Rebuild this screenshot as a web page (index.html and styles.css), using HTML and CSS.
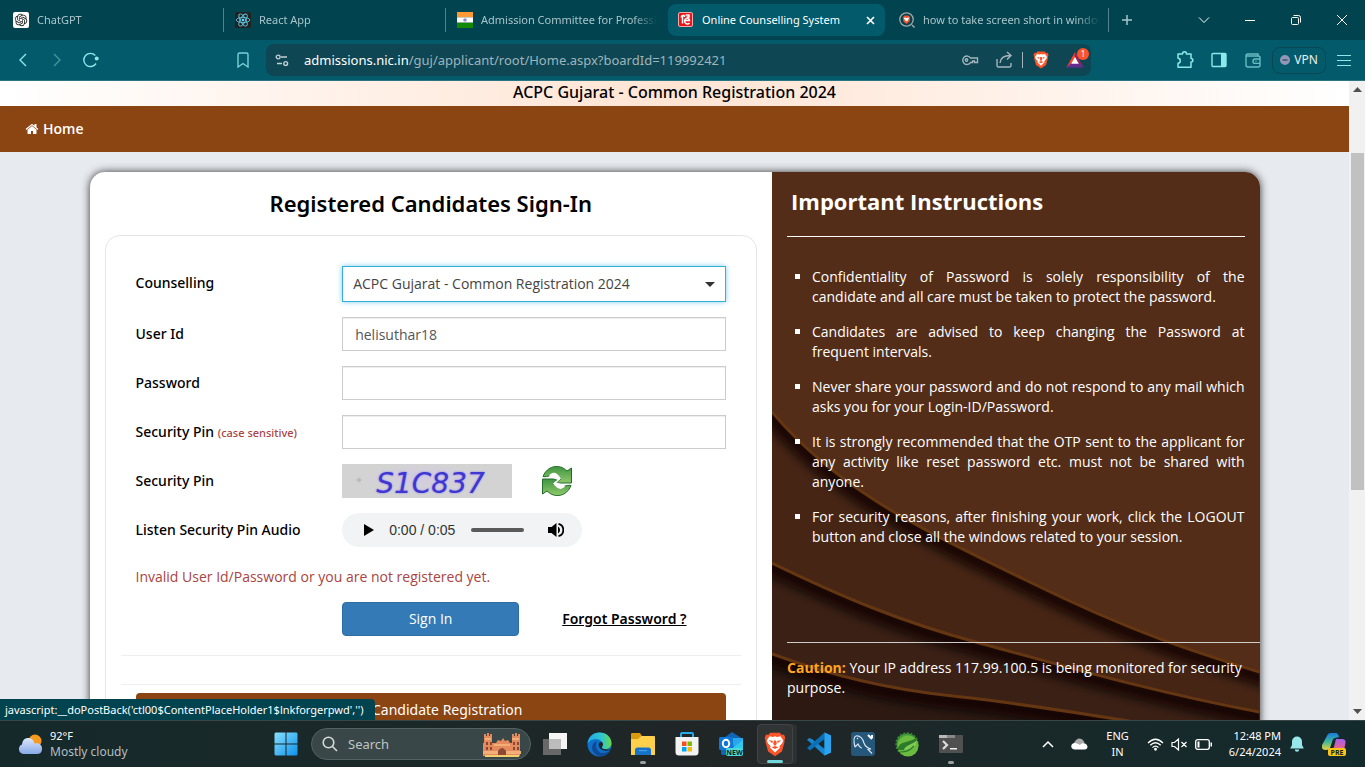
FILE: index.html
```html
<!DOCTYPE html>
<html lang="en">
<head>
<meta charset="utf-8">
<title>Online Counselling System</title>
<link rel="stylesheet" href="styles.css">
</head>
<body>
<header class="tabstrip">
  <div class="tabs" role="tablist">
    <button class="tab" role="tab"><svg class="fav" viewBox="0 0 16 16"><rect width="16" height="16" rx="2" fill="#fff"/><path transform="translate(1.8 1.7) scale(.52)" fill="#222" d="M22.2819 9.8211a5.9847 5.9847 0 0 0-.5157-4.9108 6.0462 6.0462 0 0 0-6.5098-2.9A6.0651 6.0651 0 0 0 4.9807 4.1818a5.9847 5.9847 0 0 0-3.9977 2.9 6.0462 6.0462 0 0 0 .7427 7.0966 5.98 5.98 0 0 0 .511 4.9107 6.051 6.051 0 0 0 6.5146 2.9001A5.9847 5.9847 0 0 0 13.2599 24a6.0557 6.0557 0 0 0 5.7718-4.2058 5.9894 5.9894 0 0 0 3.9977-2.9001 6.0557 6.0557 0 0 0-.7475-7.0729zm-9.022 12.6081a4.4755 4.4755 0 0 1-2.8764-1.0408l.1419-.0804 4.7783-2.7582a.7948.7948 0 0 0 .3927-.6813v-6.7369l2.02 1.1686a.071.071 0 0 1 .038.052v5.5826a4.504 4.504 0 0 1-4.4945 4.4944zm-9.6607-4.1254a4.4708 4.4708 0 0 1-.5346-3.0137l.142.0852 4.783 2.7582a.7712.7712 0 0 0 .7806 0l5.8428-3.3685v2.3324a.0804.0804 0 0 1-.0332.0615L9.74 19.9502a4.4992 4.4992 0 0 1-6.1408-1.6464zM2.3408 7.8956a4.485 4.485 0 0 1 2.3655-1.9728V11.6a.7664.7664 0 0 0 .3879.6765l5.8144 3.3543-2.0201 1.1685a.0757.0757 0 0 1-.071 0l-4.8303-2.7865A4.504 4.504 0 0 1 2.3408 7.872zm16.5963 3.8558L13.1038 8.364 15.1192 7.2a.0757.0757 0 0 1 .071 0l4.8303 2.7913a4.4944 4.4944 0 0 1-.6765 8.1042v-5.6772a.79.79 0 0 0-.407-.667zm2.0107-3.0231l-.142-.0852-4.7735-2.7818a.7759.7759 0 0 0-.7854 0L9.409 9.2297V6.8974a.0662.0662 0 0 1 .0284-.0615l4.8303-2.7866a4.4992 4.4992 0 0 1 6.6802 4.66zM8.3065 12.863l-2.02-1.1638a.0804.0804 0 0 1-.038-.0567V6.0742a4.4992 4.4992 0 0 1 7.3757-3.4537l-.142.0805L8.704 5.459a.7948.7948 0 0 0-.3927.6813zm1.0976-2.3654l2.602-1.4998 2.6069 1.4998v2.9994l-2.5974 1.4997-2.6067-1.4997Z"/></svg><span class="tab-name">ChatGPT</span></button>
    <button class="tab" role="tab"><svg class="fav" viewBox="0 0 16 16"><rect width="16" height="16" rx="2" fill="#222"/><g fill="none" stroke="#5fc4de" stroke-width=".9"><ellipse cx="8" cy="8" rx="6.8" ry="2.6"/><ellipse cx="8" cy="8" rx="6.8" ry="2.6" transform="rotate(60 8 8)"/><ellipse cx="8" cy="8" rx="6.8" ry="2.6" transform="rotate(120 8 8)"/></g><circle cx="8" cy="8" r="1.3" fill="#61dafb"/></svg><span class="tab-name">React App</span></button>
    <button class="tab" role="tab"><svg class="fav" viewBox="0 0 16 16"><path fill="#f93" d="M0 0h16v5.3H0z"/><path fill="#fff" d="M0 5.3h16v5.4H0z"/><path fill="#128807" d="M0 10.7h16V16H0z"/><circle cx="8" cy="8" r="1.8" fill="#8d8dc8"/></svg><span class="tab-name">Admission Committee for Professional</span></button>
    <div class="tab tab-active" role="tab" aria-selected="true"><svg class="fav" viewBox="0 0 16 16"><rect x=".5" y=".5" width="14" height="14" rx="1.5" fill="#e8141b" stroke="#f3a9a9"/><g fill="none" stroke="#fff" stroke-width="1.5"><path d="M3.200 5.500c.3-2.500 3-3 3.500-.5M4.500 3v8.500M7.500 3h3.500v2H8.500M6.500 8.500h5c0-3-4.800-2.800-4.900.4 0 3 2.900 3.700 5 2.200"/></g></svg><span class="tab-name">Online Counselling System</span><button class="tab-close" aria-label="Close tab"><svg width="9" height="9" viewBox="0 0 9 9"><path d="M1 1l7 7M8 1L1 8" stroke="#fff" stroke-width="1.7"/></svg></button></div>
    <button class="tab" role="tab"><svg class="fav" viewBox="0 0 16 16"><circle cx="7.500" cy="7.500" r="6.700" fill="none" stroke="#a3a8aa" stroke-width="1.300"/><path d="M13 13l2.500 2.500" stroke="#a3a8aa" stroke-width="1.400"/><path fill="#f0532d" d="M5.500 3.500h4l1.700 1.700-.6 4.200-3.100 2.700-3.100-2.700-.6-4.200z"/><path fill="#fff" d="M5.700 5.400l1.800.5 1.800-.5.8.8-1.300 2.200-1.300 1-1.300-1L4.900 6.200z"/></svg><span class="tab-name">how to take screen short in windows</span></button>
  </div>
  <button class="new-tab" aria-label="New tab"><svg width="12" height="12" viewBox="0 0 12 12"><path d="M6 1v10M1 6h10" stroke="#a9c5ca" stroke-width="1.500"/></svg></button>
  <div class="win-controls">
    <button aria-label="Search tabs"><svg width="12" height="12" viewBox="0 0 12 12"><path d="M1 3.500l5 5 5-5" fill="none" stroke="#fff"/></svg></button>
    <button aria-label="Minimize"><svg width="12" height="12" viewBox="0 0 12 12"><path d="M1 6.500h10" stroke="#fff"/></svg></button>
    <button aria-label="Restore"><svg width="12" height="12" viewBox="0 0 12 12" fill="none" stroke="#fff"><rect x="1.500" y="3.500" width="7" height="7" rx="1"/><path d="M3.500 1.500h5a2 2 0 0 1 2 2v5"/></svg></button>
    <button aria-label="Close"><svg width="12" height="12" viewBox="0 0 12 12"><path d="M1 1l10 10M11 1L1 11" stroke="#fff"/></svg></button>
  </div>
</header>

<div class="toolbar">
  <div class="nav-buttons">
    <button aria-label="Back"><svg width="10" height="16" viewBox="0 0 10 16"><path d="M8 2L2 8l6 6" fill="none" stroke="#8ce9ea" stroke-width="1.400"/></svg></button>
    <button aria-label="Forward"><svg width="10" height="16" viewBox="0 0 10 16"><path d="M2 2l6 6-6 6" fill="none" stroke="#45949f" stroke-width="1.400"/></svg></button>
    <button aria-label="Reload"><svg width="18" height="16" viewBox="0 0 18 16"><path d="M13.300 3.500A6.600 6.600 0 1 0 14 11.500" fill="none" stroke="#8ce9ea" stroke-width="1.400"/><circle cx="14.700" cy="6.500" r="2" fill="#8ce9ea"/></svg></button>
  </div>
  <button class="bookmark" aria-label="Bookmark"><svg width="12" height="16" viewBox="0 0 12 16"><path d="M1 2.500Q1 1 2.500 1h7Q11 1 11 2.500V15l-5-3.500L1 15z" fill="none" stroke="#7dd0d4" stroke-width="1.400"/></svg></button>
  <div class="address">
    <svg width="14" height="13" viewBox="0 0 14 13" fill="none" stroke="#c4d0d3" stroke-width="1.400"><circle cx="3.200" cy="3" r="1.900"/><path d="M6 3h6M2 9.500h5"/><circle cx="10.700" cy="9.500" r="1.900"/></svg>
    <div class="url" role="textbox" aria-label="Address"><b>admissions.nic.in</b>/guj/applicant/root/Home.aspx?boardId=119992421</div>
    <button aria-label="Passwords"><svg width="18" height="12" viewBox="0 0 18 12" fill="none" stroke="#a4b5ba" stroke-width="1.400"><path d="M9.500 4H16.500v4.500h-3V7h-2v1.500h-2A4.200 4.200 0 1 1 9.500 4z"/><circle cx="5.500" cy="6" r="1.200"/></svg></button>
    <button aria-label="Share"><svg width="18" height="18" viewBox="0 0 18 18" fill="none" stroke="#a4b5ba" stroke-width="1.400"><path d="M2 8v6.500q0 1.500 1.500 1.500h11q1.500 0 1.500-1.500V12M5 12c.3-5 4-7.500 10.500-7.500M12 1l4 3.500L12 8.500"/></svg></button>
    <i class="rule"></i>
    <button aria-label="Shields"><svg width="16" height="18" viewBox="0 0 16 18"><use href="#lion"/></svg></button>
    <button class="rewards" aria-label="Rewards"><svg width="20" height="18" viewBox="0 0 20 18"><path fill="#ff4724" d="M10 1l2 4-6 9-4.500 2.500z"/><path fill="#9e1f63" d="M10 1l8.500 15.500L13 12 9.500 5z"/><path fill="#662d91" d="M1.500 16.500L6 12h8l4.500 4.500z"/><path fill="#fff" d="M10 6l3.800 6.700H6.200z"/></svg><span class="badge">1</span></button>
  </div>
  <div class="ext">
    <button aria-label="Extensions"><svg width="18" height="18" viewBox="0 0 18 18"><path d="M2 3h4.500c0-3 4-3 4 0H15v4.500c2.500 0 2.500 3.500 0 3.500v5.300H2v-4c3 0 3-5 0-5z" fill="none" stroke="#8ce9ea" stroke-width="1.500" stroke-linejoin="round"/></svg></button>
    <button aria-label="Sidebar"><svg width="18" height="18" viewBox="0 0 18 18"><rect x="2" y="2.500" width="14" height="13" rx="1" fill="none" stroke="#8ce9ea" stroke-width="1.400"/><path d="M11 2h5v14h-5z" fill="#8ce9ea"/></svg></button>
    <button aria-label="Wallet"><svg width="18" height="18" viewBox="0 0 18 18" fill="none" stroke="#69bcc3" stroke-width="1.400"><path d="M14 5V3H4Q2 3 2 5v9q0 2 2 2h10q2 0 2-2V6.500Q16 5 14 5H2M16 8h-5q-2 0-2 2.200t2 2.200h5M11.500 10.200h1"/></svg></button>
    <button class="vpn"><i></i>VPN</button>
    <button aria-label="Menu"><svg width="16" height="14" viewBox="0 0 16 14"><path d="M1 2.500h14M1 7.500h14M1 12.500h14" stroke="#8ce9ea"/></svg></button>
  </div>
</div>

<div class="viewport">
  <main class="page">
    <div class="board-name">ACPC Gujarat - Common Registration 2024</div>
    <nav class="site-nav"><a href="#"><svg width="14" height="14" viewBox="0 0 1792 1792" fill="#fff"><path d="M1472 992v480q0 26-19 45t-45 19h-384v-384h-256v384h-384q-26 0-45-19t-19-45v-480q0-1 .5-3t.5-3l575-474 575 474q1 2 1 6zm223-69l-62 74q-8 9-21 11h-3q-13 0-21-7l-692-577-692 577q-12 8-24 7-13-2-21-11l-62-74q-8-10-7-23.500t11-21.500l719-599q32-26 76-26t76 26l244 204v-195q0-14 9-23t23-9h192q14 0 23 9t9 23v408l219 182q10 8 11 21.500t-7 23.500z"/></svg>Home</a></nav>
    <section class="card">
      <div class="signin">
        <h2>Registered Candidates Sign-In</h2>
        <form class="panel">
          <div class="fields">
            <label for="board">Counselling</label>
            <select id="board" class="control"><option>ACPC Gujarat - Common Registration 2024</option></select>
            <label for="user">User Id</label>
            <input id="user" class="control" type="text" value="helisuthar18">
            <label for="pass">Password</label>
            <input id="pass" class="control" type="password">
            <label for="pin">Security Pin <small>(case sensitive)</small></label>
            <input id="pin" class="control" type="text">
            <span class="label">Security Pin</span>
            <div class="captcha-row">
              <div class="captcha">S1C837</div>
              <button type="button" class="refresh" aria-label="Refresh pin"><svg width="32" height="32" viewBox="0 0 32 32"><defs><linearGradient id="gr" x2="0" y2="1"><stop stop-color="#3f9440"/><stop offset="1" stop-color="#8fc96b"/></linearGradient></defs><g fill="url(#gr)" stroke="#236b28" stroke-linejoin="round"><path d="M2 11.500C6 1 18-2 26 6l4.500-3v15H14.500l5.500-4c-4-6-9-6.500-11-3.500-2 1-4.500 1.500-7 1z"/><path d="M30 20.500C26 31 14 34 6 26l-4.500 3V14H17.500L12 18c4 6 9 6.500 11 3.500 2-1 4.500-1.500 7-1z"/></g><path fill="#fff" d="M8 10.500c3.500-4.500 8-3.500 12 3l-4.500 4 5 1.800 3.500 2.200c-3.500 4-8 3-12-3.200l4.500-3.500-4.500-1.800z"/></svg></button>
            </div>
            <span class="label">Listen Security Pin Audio</span>
            <div class="audio">
              <button type="button" aria-label="Play"><svg width="10" height="12" viewBox="0 0 10 12"><path d="M0 0l10 6-10 6z"/></svg></button>
              <span>0:00 / 0:05</span>
              <input type="range" value="0" aria-label="Seek">
              <button type="button" aria-label="Mute"><svg width="16" height="16" viewBox="0 0 16 16"><path d="M0 5h3.500L8.500 1v14l-5-4H0zM10 4.500a4 4 0 0 1 0 7z"/><path d="M10.500 1.800a6.400 6.400 0 0 1 0 12.400" fill="none" stroke="#000" stroke-width="1.800"/></svg></button>
            </div>
            <p class="error">Invalid User Id/Password or you are not registered yet.</p>
            <div class="actions">
              <button type="button" class="btn-signin">Sign In</button>
              <a href="#" class="forgot">Forgot Password ?</a>
            </div>
          </div>
          <hr><hr>
          <button type="button" class="btn-register">New Candidate Registration</button>
        </form>
      </div>
      <aside class="notes">
        <svg class="waves" viewBox="0 0 488 560" preserveAspectRatio="none">
          <defs>
            <filter id="soft" x="-10%" y="-20%" width="120%" height="140%"><feGaussianBlur stdDeviation="6"/></filter>
            <clipPath id="c1"><path d="M0 241C68 321 150 358 258 411S430 483 488 501V560H0z"/></clipPath>
            <clipPath id="c2"><path d="M0 391C70 425 130 450 204 470S380 520 488 540V560H0z"/></clipPath>
            <clipPath id="c3"><path d="M0 482C60 504 120 518 181 524S320 543 400 556V560H0z"/></clipPath>
          </defs>
          <g fill="none">
            <g clip-path="url(#c1)"><path fill="#472515" d="M0 200h488v360H0z"/><path d="M-20 226L0 246C68 325 150 362 258 415S430 487 488 505l20 6" stroke="#100600" stroke-width="14" filter="url(#soft)"/></g>
            <path d="M0 240C68 320 150 357 258 410S430 482 488 500" stroke="#643612" stroke-width="3"/>
            <g clip-path="url(#c2)"><path fill="#3b2015" d="M0 200h488v360H0z"/><path d="M-20 386L0 396C70 430 130 455 204 475S380 525 488 545l20 4" stroke="#100600" stroke-width="14" filter="url(#soft)"/></g>
            <path d="M0 391C70 425 130 450 204 470S380 520 488 540" stroke="#643612" stroke-width="3"/>
            <g clip-path="url(#c3)"><path fill="#2d1912" d="M0 200h488v360H0z"/><path d="M-20 480L0 487C60 509 120 523 181 529S320 548 400 561" stroke="#100600" stroke-width="14" filter="url(#soft)"/></g>
            <path d="M0 482C60 504 120 518 181 524S320 543 400 556" stroke="#643612" stroke-width="3"/>
          </g>
        </svg>
        <div class="notes-body">
          <h2>Important Instructions</h2>
          <ul>
            <li>Confidentiality of Password is solely responsibility of the candidate and all care must be taken to protect the password.</li>
            <li>Candidates are advised to keep changing the Password at frequent intervals.</li>
            <li>Never share your password and do not respond to any mail which asks you for your Login-ID/Password.</li>
            <li>It is strongly recommended that the OTP sent to the applicant for any activity like reset password etc. must not be shared with anyone.</li>
            <li>For security reasons, after finishing your work, click the LOGOUT button and close all the windows related to your session.</li>
          </ul>
          <p class="caution"><b>Caution:</b> Your IP address 117.99.100.5 is being monitored for security purpose.</p>
        </div>
      </aside>
    </section>
  </main>
  <div class="scrollbar">
    <svg width="16" height="17" viewBox="0 0 16 17"><path d="M4 11h9L8.500 6z" fill="#505050"/></svg>
    <i class="before"></i><i class="thumb"></i><i class="after"></i>
    <svg width="16" height="17" viewBox="0 0 16 17"><path d="M4 6h9l-4.500 5z" fill="#505050"/></svg>
  </div>
  <div class="link-status">javascript:__doPostBack('ctl00$ContentPlaceHolder1$lnkforgerpwd','')</div>
</div>

<footer class="taskbar">
  <button class="weather">
    <svg width="25" height="22" viewBox="0 0 25 22"><defs><linearGradient id="cl" x2="0" y2="1"><stop stop-color="#dbe7fb"/><stop offset="1" stop-color="#87a9e8"/></linearGradient></defs><circle cx="17" cy="8" r="6.500" fill="#f79a1e"/><path fill="url(#cl)" d="M5 21a5 5 0 0 1-1-9.500C4.500 7 7 5 10 5c4 0 6 2.500 6.500 5.500 5-1 8 2 7.500 6-.3 3-2 4.500-5 4.500z"/></svg>
    <span>92°F<small>Mostly cloudy</small></span>
  </button>
  <div class="apps">
    <button aria-label="Start"><svg width="24" height="24" viewBox="0 0 24 24"><defs><linearGradient id="wn" gradientUnits="userSpaceOnUse" x2="24" y2="24"><stop stop-color="#8be3fc"/><stop offset="1" stop-color="#0b8eec"/></linearGradient></defs><path fill="url(#wn)" d="M1.500.5H11.500V11.500H.5V1.500zM12.500.5H22.500l1 1v10h-11zM.5 12.500h11v11H1.500l-1-1zM12.500 12.500h11V22.500l-1 1h-10z"/></svg></button>
    <div class="search">
      <svg width="16" height="16" viewBox="0 0 16 16" fill="none" stroke="#d5dada" stroke-width="1.600"><circle cx="6.500" cy="6.500" r="5.300"/><path d="M10.500 10.500L15 15"/></svg>
      <input type="text" placeholder="Search" aria-label="Search">
      <svg width="40" height="26" viewBox="0 0 40 26"><path fill="#e58a5d" d="M2 3h2v2h1V2h2v3h1V3h2v9h4l2-3 3 1 2-3 2 3 3-1 2 3h2V3h2v2h1V2h2v3h1V3h2v22H1V12h1z"/><path fill="#f2b078" d="M3 7h6v2H3zM30 7h7v2h-7zM1 20h38v3H1zM12 13h16v2H12z"/><path fill="#8c4735" d="M16 25v-5q4-6 8 0v5zM4 11h2v3H4zM8 11h2v3H8zM31 11h2v3h-2zM35 11h2v3h-2zM4 16h2v3H4zM8 16h2v3H8zM31 16h2v3h-2zM35 16h2v3h-2z"/><path fill="#f5cf6b" d="M3 24h34v2H3z"/></svg>
    </div>
    <button aria-label="Task view"><svg width="24" height="22" viewBox="0 0 24 22"><path fill="#686868" d="M0 6h18v16H0z"/><path fill="#f5f5f5" d="M6 0h18v16H6z"/><path fill="#bcbcbc" d="M6 6h12v10H6z"/></svg></button>
    <button aria-label="Edge"><svg width="25" height="25" viewBox="0 0 25 25"><defs><linearGradient id="eg"><stop stop-color="#20a9e5"/><stop offset=".6" stop-color="#31c6cf"/><stop offset="1" stop-color="#67d949"/></linearGradient></defs><circle cx="12.500" cy="12.500" r="12" fill="#0d70ca"/><path fill="url(#eg)" d="M.5 12C1 5 6 .5 12.500.5c7 0 12 5 12 10.500 0 4-3 6-6.500 6-3 0-4-1.300-2.500-3C17 9 11 5.500 6 7.500 3 8.500 1.300 10 .5 12z"/><path fill="#104a96" d="M10 9c-3 6 1 12 6 12 3 0 5.500-1 7.500-3-3 6-9 7.500-14 5C3 19 4 11 10 9z"/><path fill="#20272b" d="M15.500 14c1-1.500.5-4-1.500-4-3 0-3.500 5 .5 7.500 3 1.800 7 1.500 9.300-.3C20 18 13 17.500 15.500 14z"/></svg></button>
    <button aria-label="Explorer" class="running"><svg width="24" height="22" viewBox="0 0 24 22"><path fill="#d99b0d" d="M0 1q0-1 1-1h8l2 3h-1L8 6H0z"/><path fill="#ffd04b" d="M0 6h7l3-3h13q1 0 1 1v18H0z"/><path fill="#1673c9" d="M4 22v-5q0-2.500 2.500-2.500h11Q20 14.500 20 17v5z"/><path fill="#44a0e8" d="M8 17h8v1.200H8z"/></svg></button>
    <button aria-label="Store"><svg width="24" height="24" viewBox="0 0 24 24"><path fill="none" stroke="#24abe9" stroke-width="2" d="M6 6V2q0-1 1-1h10q1 0 1 1v4"/><path fill="#f2f2f2" d="M.5 5h23v15q0 3.500-3.500 3.500H4Q.5 23.500.5 20z"/><path fill="#f25022" d="M7 9.500h4.500V14H7z"/><path fill="#7fba00" d="M12.500 9.500H17V14h-4.500z"/><path fill="#00a4ef" d="M7 15h4.500v4.500H7z"/><path fill="#ffb900" d="M12.500 15H17v4.500h-4.500z"/></svg></button>
    <button aria-label="Outlook"><svg width="26" height="24" viewBox="0 0 26 24"><path fill="#1066b5" d="M3 8L14 0l11 7v14q0 2-2 2H5q-2 0-2-2z"/><path fill="#28a8ea" d="M14 6h11v8l-9 3z"/><path fill="#32c8ee" d="M25 8L11 19l6 4 8-6z"/><rect x="1" y="5" width="14" height="13" rx="1.500" fill="#0f78d4"/><ellipse cx="8" cy="11.500" rx="3.200" ry="3.700" fill="none" stroke="#fff" stroke-width="2"/><rect x="8" y="16" width="17" height="8" rx="2" fill="#4bdad8"/><text x="16.500" y="22.500" text-anchor="middle" class="tag-text">NEW</text></svg></button>
    <button aria-label="Brave" class="running current"><svg width="22" height="25" viewBox="0 0 16 18"><g id="lion"><path fill="#fb542b" d="M4.500.5h7L13 2l1.500-.3 1 2.300-.7 2 .2 1-2 7-5 3.500-5-3.500-2-7 .2-1-.7-2 1-2.300L3 2z"/><path fill="#fff" d="M4 3l2.500.5L8 3l1.500.5L12 3l2 3-.8 2-2 2.300.4 1L8 14.800l-3.600-3.500.4-1-2-2.300L2 6z"/><path fill="#fb542b" d="M3.500 5.700l3 .8L6 8zM12.500 5.700l-3 .8L10 8zM7.200 6l-.5 2.200.7 1.500H8.600l.7-1.500L8.800 6zM5.500 11L8 10l2.500 1L8 12.300z"/></g></svg></button>
    <button aria-label="Visual Studio Code"><svg width="24" height="24" viewBox="0 0 24 24"><path fill="#1788cf" d="M17.500.5L24 3.500v17L17.500 23.500 2 9.500 0 8l2-2 3 1 12.500 10V7z"/><path fill="#0871b8" d="M17.500 7L3 18.500 0 16 17.500.5z"/><path fill="#2ba4ef" d="M17.500.5L24 3.500v17l-6.500 3z"/></svg></button>
    <button aria-label="MySQL Workbench"><svg width="24" height="24" viewBox="0 0 24 24"><rect width="24" height="24" rx="3" fill="#245779"/><path fill="none" stroke="#d5e3ee" stroke-width="1.200" d="M4 15C3 11 2 5 5 4c4-1 7 3 8 7 1 3 3 5 7 6l-3 .5 4 4M4 15l3-3c1 2 2 4 4 4M6 6l1 1"/><path stroke="#fff" stroke-width="2" d="M17 3l4 4M21 3v3"/></svg></button>
    <button aria-label="Spring"><svg width="25" height="25" viewBox="0 0 25 25"><circle cx="12" cy="12" r="10.500" fill="#49a340" stroke="#388934" stroke-width="2.500" stroke-dasharray="2 1.500"/><circle cx="13" cy="14" r="10.500" fill="#6abb3e"/><path fill="#2d7a2c" d="M3 18C3 8 14 12 22 5c1 9-3 13-12 13z"/><path fill="#7fcb51" d="M9 18c1-5 8-5 13-10 0 8-5 11-13 10z"/><path fill="none" stroke="#2d7a2c" stroke-width="1.200" d="M5 20q9 0 14-6"/></svg></button>
    <button aria-label="Terminal" class="running"><svg width="24" height="18" viewBox="0 0 24 18"><rect width="24" height="18" rx="1" fill="#505050"/><path fill="#b9b9b9" d="M0 0h8v3H0z"/><path fill="#888" d="M8 0h8v3H8z"/><path fill="none" stroke="#ddd" stroke-width="2.200" d="M4 6l4 4-4 4"/><path fill="#eee" d="M11 13h7v1.500h-7z"/></svg></button>
  </div>
  <div class="tray">
    <button class="up" aria-label="Hidden icons"><svg width="12" height="8" viewBox="0 0 12 8"><path d="M1 7l5-5 5 5" fill="none" stroke="#fff" stroke-width="1.500"/></svg></button>
    <button class="drive" aria-label="OneDrive"><svg width="17" height="12" viewBox="0 0 17 12"><path fill="#aaa" d="M3 5Q6-1 10.500 1C12 2 13 3 13.500 5L9 9z"/><path fill="#fff" d="M4 11.500C-1 11.500-1 5 4 5c2 0 3 1 5 2 2-3 7-2 7.500 1.500 0 2-1 3-3 3z"/></svg></button>
    <button class="lang">ENG<br>IN</button>
    <button class="status" aria-label="Network and sound">
      <svg width="17" height="13" viewBox="0 0 17 13" fill="none" stroke="#fff" stroke-width="1.300"><path d="M1 5q7.500-7.500 15 0M3.300 7.300q5.200-5 10.400 0M5.500 9.600q3-3 6 0"/><circle cx="8.500" cy="11.300" r=".8" fill="#fff"/></svg>
      <svg width="17" height="13" viewBox="0 0 17 13" fill="none" stroke="#fff" stroke-width="1.200"><path d="M1 4.500h2.500L7.500 1v11L3.500 8.500H1zM10.500 4l5 5M15.500 4l-5 5"/></svg>
      <svg width="17" height="11" viewBox="0 0 17 11"><rect x=".7" y=".7" width="13.600" height="9.600" rx="2" fill="none" stroke="#fff" stroke-width="1.300"/><path fill="#fff" d="M2.500 2.500h2v6h-2zM15.500 3.500H17v4h-1.500z"/></svg>
    </button>
    <button class="clock">12:48 PM<br>6/24/2024</button>
    <button class="bell" aria-label="Notifications"><svg width="14" height="16" viewBox="0 0 14 16"><path fill="#98e8ea" d="M7 .5a5 5 0 0 1 5 5V9l1.800 3.500H.2L2 9V5.500a5 5 0 0 1 5-5zM4.800 13.500h4.400a2.200 2.200 0 0 1-4.400 0z"/></svg></button>
    <button class="copilot" aria-label="Copilot"><svg width="24" height="23" viewBox="0 0 24 23"><defs><linearGradient id="k1" x2="0" y2="1"><stop stop-color="#167ce0"/><stop offset=".5" stop-color="#3eb59d"/><stop offset="1" stop-color="#ead43a"/></linearGradient><linearGradient id="k2" x2="0" y2="1"><stop stop-color="#a55ff0"/><stop offset="1" stop-color="#f3627d"/></linearGradient></defs><path fill="url(#k1)" d="M6 1q1-1 3-1h5q2 0 3 4l-4 1q-2 0-3 4l-2 6q-1 2-4 2-5 0-4-5z"/><path fill="url(#k2)" d="M14 6h6q4 0 3.500 4L22 17H10l2-3z"/><rect x="6" y="15" width="18" height="8" rx="2" fill="#fdc617"/><text x="15" y="22" text-anchor="middle" class="tag-text">PRE</text></svg></button>
  </div>
</footer>
</body>
</html>
```
FILE: styles.css
```css
* { box-sizing: border-box; }

body {
  margin: 0;
  height: 100vh;
  display: flex;
  flex-direction: column;
  overflow: hidden;
  font: 14px/20px "Open Sans", sans-serif;
  color: #000;
}

button {
  padding: 0;
  border: 0;
  background: none;
  font: inherit;
  color: inherit;
  display: flex;
  align-items: center;
  justify-content: center;
}

svg { flex: none; display: block; }

.tabstrip, .toolbar, .link-status, .taskbar { font-family: "Noto Sans", sans-serif; }

/* Browser tabs */
.tabstrip {
  flex: none;
  height: 40px;
  display: flex;
  align-items: center;
  background: #01434f;
  color: #a9c5ca;
  font-size: 11px;
}
.tabs { flex: 0 1 1109px; display: flex; align-items: center; min-width: 0; padding-left: 2px; }
.tab {
  flex: 0 1 222px;
  min-width: 0;
  height: 24px;
  padding: 0 10px 0 11px;
  justify-content: flex-start;
  gap: 8px;
  border-right: 1px solid #54828a;
}
.tab:nth-child(3) { border-color: transparent; }
.tab-active {
  flex-basis: 217px;
  display: flex;
  align-items: center;
  height: 32px;
  margin-right: 4px;
  padding: 0 10px;
  border: 0;
  border-radius: 8px;
  background: #025a6b;
  color: #fff;
}
.tab:last-child { flex-basis: 220px; padding: 0 8px 0 10px; }
.fav { width: 16px; height: 16px; }
.tab-name {
  flex: 1;
  text-align: left;
  white-space: nowrap;
  overflow: hidden;
  mask-image: linear-gradient(to left, transparent, #000 24px);
}
.tab-active .tab-name { mask-image: none; }
.new-tab { width: 36px; height: 32px; }
.win-controls { margin-left: auto; display: flex; }
.win-controls button { width: 46px; height: 40px; }

/* Browser toolbar */
.toolbar {
  flex: none;
  height: 41px;
  display: flex;
  align-items: center;
  background: #025a6b;
  border-bottom: 1px solid #2b7583;
}
.nav-buttons { display: flex; padding-left: 6px; }
.nav-buttons button { width: 34px; height: 32px; }
.bookmark { width: 32px; height: 32px; margin-left: 119px; }
.address {
  flex: 1;
  min-width: 0;
  height: 32px;
  display: flex;
  align-items: center;
  gap: 8px;
  margin-left: 7px;
  padding-left: 9px;
  border-radius: 8px;
  background: #0e4654;
}
.url { flex: 1; margin-left: 7px; white-space: nowrap; overflow: hidden; font-size: 13px; color: #9fb5bb; }
.url b { font-weight: 400; color: #fff; }
.address button { min-width: 20px; height: 24px; }
.address button:nth-of-type(2) { margin-left: 6px; }
.rule { width: 1px; height: 16px; background: #a4b5ba; }
.rewards { position: relative; width: 32px; }
.badge {
  position: absolute;
  top: 0;
  right: 2px;
  width: 12px;
  height: 12px;
  border-radius: 6px;
  background: #fb542b;
  color: #fff;
  font-size: 8px;
  line-height: 12px;
}
.ext { display: flex; align-items: center; padding: 0 13px 0 85px; gap: 16px; }
.vpn {
  height: 27px;
  width: 54px;
  margin: 0 -6px 0 -6px;
  gap: 4px;
  border: 1px solid #084753;
  border-radius: 8px;
  color: #e8f1f3;
  font-size: 12px;
}
.vpn i { width: 10px; height: 10px; border: solid #9197b5; border-width: 4px 2px; border-radius: 5px; background: #4c5f80; }

/* Web page */
.viewport { position: relative; flex: 1; min-height: 0; display: flex; }
.page { flex: 1; min-width: 0; overflow: hidden; background: #e7eaef; }
.board-name {
  height: 25px;
  text-align: center;
  font: 500 16px/22px "Noto Sans", sans-serif;
  background: linear-gradient(90deg, #fff, #ffe4d3 50%, #fff);
}
.site-nav { height: 46px; display: flex; align-items: center; padding: 0 25px; background: #8b4513; }
.site-nav a { display: flex; align-items: center; gap: 4px; color: #fff; font-weight: 600; text-decoration: none; }
.card {
  display: grid;
  grid-template-columns: 7fr 5fr;
  width: 1170px;
  max-width: 100%;
  margin: 20px auto 0;
  border-radius: 15px;
  background: #fff;
  box-shadow: 0 0 8px #333;
}
.signin { padding: 0 15px; }
.card h2 { margin: 0; font-size: 22px; line-height: 30px; }
.signin h2 { padding: 16px 0 17px; text-align: center; font-family: "Noto Sans", sans-serif; font-weight: 600; }
.panel { padding: 30px 15px 20px; border: 1px solid #e5e5e5; border-radius: 15px; }
.fields {
  display: grid;
  grid-template-columns: 35fr 65fr;
  gap: 15px 0;
  padding: 0 15px;
}
.fields label, .label { font: 500 14px/34px "Noto Sans", sans-serif; }
.fields small { font-size: 11px; line-height: 1; color: #a94442; font-weight: 500; }
.control {
  width: 100%;
  height: 34px;
  padding: 6px 12px;
  border: 1px solid #ccc;
  border-radius: 0;
  background: #fff;
  box-shadow: inset 0 1px 1px rgba(0, 0, 0, .075);
  font: 14px/20px "Open Sans", sans-serif;
  color: #555;
}
select.control {
  appearance: none;
  height: 36px;
  padding: 6px 10px;
  border-color: #35aedd;
  box-shadow: 0 0 5px #7ecdeb;
  color: #444;
  background: #fff url("data:image/svg+xml,%3Csvg xmlns='http://www.w3.org/2000/svg' width='10' height='5'%3E%3Cpath d='M0 0h10L5 5z' fill='%23333'/%3E%3C/svg%3E") no-repeat right 10px center;
}
.captcha-row { display: flex; align-items: center; gap: 29px; height: 34px; }
.captcha {
  width: 170px;
  height: 34px;
  padding-left: 34px;
  background:
    radial-gradient(circle at 17px 16px, #b8b8c0 1px, transparent 3px),
    radial-gradient(ellipse at 48% 40%, #d3cbe2, transparent 48%),
    #d3d3d3;
  color: #3f37cf;
  font: italic 28px/40px "DejaVu Sans", sans-serif;
  text-shadow: 0 0 2px #7d70ff;
}
.audio {
  width: 240px;
  height: 34px;
  display: flex;
  align-items: center;
  padding: 0 18px 0 22px;
  border-radius: 17px;
  background: #f1f3f4;
  font: 14px/20px "Liberation Sans", sans-serif;
  color: #333;
}
.audio span { margin-left: 15px; }
.audio input { appearance: none; flex: 1; min-width: 0; height: 4px; margin: 0 24px 0 16px; border-radius: 2px; background: #5a5a5a; }
.audio input::-webkit-slider-thumb { appearance: none; width: 0; height: 0; }
.error { grid-column: 1 / -1; margin: 0; padding-top: 5px; color: #a94442; }
.actions { grid-column: 2; display: flex; align-items: center; gap: 43px; }
.btn-signin { width: 177px; height: 34px; border: 1px solid #2e6da4; border-radius: 4px; background: #337ab7; color: #fff; }
.forgot { color: #000; font-family: "Noto Sans", sans-serif; font-weight: 600; }
.panel hr { margin: 19px 0 0; border: 0; border-top: 1px solid #eee; }
.panel hr + hr { margin-top: 28px; }
.btn-register { width: calc(100% - 30px); height: 34px; margin: 8px 15px 0; border-radius: 4px; background: #8b4513; color: #fff; font-family: "Noto Sans", sans-serif; }

.notes { position: relative; overflow: hidden; border-radius: 0 15px 15px 0; background: #532d18; color: #fff; }
.waves { position: absolute; top: 0; left: 0; width: 100%; height: 560px; }
.notes-body { position: relative; padding: 0 0 20px 15px; }
.notes h2 { margin-right: 15px; padding: 14px 4px 20px; border-bottom: 1px solid #fff; font-weight: 700; }
.notes ul { margin: 30px 15px 0 0; padding-left: 25px; list-style: square; text-align: justify; }
.notes li { margin-bottom: 15px; }
.caution { margin: 95px 0 0; padding: 15px 15px 0 0; border-top: 1px solid #ccc; }
.notes li:last-child { margin-bottom: 0; }
.caution b { color: #ffa51f; font-weight: 700; }

.scrollbar { flex: none; width: 16px; display: flex; flex-direction: column; background: #f1f1f1; }
.before { flex: 55; }
.thumb { flex: 337; margin: 0 1px 0 2px; background: #c1c1c1; }
.after { flex: 213; }
.link-status {
  position: absolute;
  left: 0;
  bottom: 0;
  padding: 0 12px 0 5px;
  border-radius: 0 4px 0 0;
  background: #01434f;
  color: #fff;
  font-size: 11px;
  line-height: 21px;
}

/* Desktop taskbar */
.taskbar {
  flex: none;
  height: 47px;
  display: flex;
  align-items: center;
  border-top: 1px solid #394648;
  background: linear-gradient(90deg, #15292b, #1b2828 30%, #212526 55%, #1a2829 72%, #132a2c);
  color: #fff;
  font-size: 11px;
  line-height: 16px;
}
.weather { width: 264px; padding-left: 18px; gap: 7px; justify-content: flex-start; text-align: left; }
.weather small { display: block; font-size: 12px; color: #b5bfc0; }
.apps { display: flex; align-items: center; }
.apps > button { position: relative; width: 44px; height: 40px; }
.search {
  width: 220px;
  height: 32px;
  display: flex;
  align-items: center;
  gap: 10px;
  margin: 0 2px 0 3px;
  padding: 0 8px 0 10px;
  border: 1px solid #536162;
  border-radius: 16px;
  background: #3a4748;
}
.search input { flex: 1; min-width: 0; padding: 0; border: 0; outline: 0; background: none; font: 13px/20px "Noto Sans", sans-serif; color: #fff; }
.search input::placeholder { color: #bdc5c5; }
.apps > .current { width: 36px; margin: 0 4px; border: 1px solid #404445; border-radius: 4px; background: #303435; box-shadow: 4px 0 0 #2b3031; }
.running::after {
  content: "";
  position: absolute;
  bottom: 0;
  left: 50%;
  width: 6px;
  height: 3px;
  margin-left: -3px;
  border-radius: 2px;
  background: #9b9fa0;
}
.current::after { width: 16px; margin-left: -8px; background: #70d7dc; }
.tag-text { font: bold 7px "Open Sans", sans-serif; fill: #10242a; }
.tray { margin-left: auto; display: flex; align-items: center; padding-right: 19px; }
.drive { margin-left: 17px; }
.lang { margin-left: 18px; }
.status { gap: 7px; margin-left: 18px; }
.clock { margin-left: 17px; text-align: right; }
.bell { margin-left: 9px; }
.copilot { margin-left: 18px; }
```
